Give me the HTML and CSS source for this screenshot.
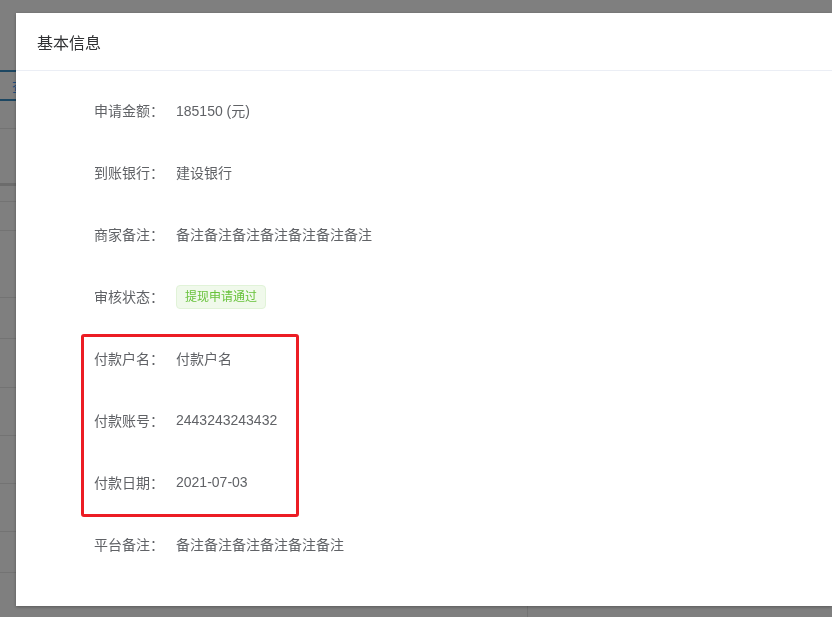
FILE: index.html
```html
<!DOCTYPE html>
<html lang="zh-CN">
<head>
<meta charset="utf-8">
<title>基本信息</title>
<link rel="stylesheet" href="styles.css">
</head>
<body>
<div class="page">
  <div class="topbar"></div>
  <div class="tabs"><span class="tab-text">查</span></div>
  <div class="trow h27"></div>
  <div class="trow h54 nob"></div>
  <div class="band"></div>
  <div class="trow h16"></div>
  <div class="trow h28"></div>
  <div class="trow h66"></div>
  <div class="trow h40"></div>
  <div class="trow h48"></div>
  <div class="trow h47"></div>
  <div class="trow h47"></div>
  <div class="trow h47"></div>
  <div class="trow h40"></div>
  <div class="trow bottom"><div class="cell-left"></div><div class="cell-right"></div></div>
</div>

<div class="overlay"></div>

<div class="dialog">
  <div class="dialog-header">
    <span class="dialog-title">基本信息</span>
  </div>
  <div class="dialog-body">
    <div class="row"><span class="label">申请金额：</span><span class="value">185150 (元)</span></div>
    <div class="row"><span class="label">到账银行：</span><span class="value">建设银行</span></div>
    <div class="row"><span class="label">商家备注：</span><span class="value">备注备注备注备注备注备注备注</span></div>
    <div class="row"><span class="label">审核状态：</span><span class="tag">提现申请通过</span></div>
    <div class="group">
      <div class="row"><span class="label">付款户名：</span><span class="value">付款户名</span></div>
      <div class="row"><span class="label">付款账号：</span><span class="value">2443243243432</span></div>
      <div class="row"><span class="label">付款日期：</span><span class="value">2021-07-03</span></div>
    </div>
    <div class="row"><span class="label">平台备注：</span><span class="value">备注备注备注备注备注备注</span></div>
  </div>
</div>
</body>
</html>
```

FILE: styles.css
```css
html, body {
  margin: 0;
  padding: 0;
  width: 832px;
  height: 617px;
  overflow: hidden;
  font-family: "Liberation Sans", "Noto Sans CJK SC", sans-serif;
}

.page {
  background: #ffffff;
  height: 617px;
}

.topbar {
  height: 70px;
  border-bottom: 2px solid #3a8ec4;
}

.tabs {
  height: 27px;
  border-bottom: 2px solid #3a8ec4;
  display: flex;
  align-items: center;
  font-size: 14px;
  color: #409eff;
}

.tab-text {
  margin-left: 12px;
}

.trow {
  border-bottom: 1px solid #e6e6e6;
}

.trow.nob {
  border-bottom: none;
}

.band {
  height: 3px;
  background: #d8d8d8;
}

.h16 { height: 15px; }
.h27 { height: 27px; }
.h28 { height: 28px; }
.h40 { height: 40px; }
.h47 { height: 47px; }
.h48 { height: 48px; }
.h54 { height: 54px; }
.h66 { height: 66px; }

.trow.bottom {
  height: 60px;
  display: flex;
  border-bottom: none;
}

.cell-left {
  width: 527px;
  border-right: 1px solid #e6e6e6;
}

.overlay {
  position: fixed;
  inset: 0;
  background: rgba(0, 0, 0, 0.5);
}

.dialog {
  position: absolute;
  top: 13px;
  left: 16px;
  right: 0;
  height: 593px;
  background: #ffffff;
  box-shadow: 0 1px 3px rgba(0, 0, 0, 0.3);
}

.dialog-header {
  height: 58px;
  border-bottom: 1px solid #ebeef5;
  display: flex;
  align-items: center;
  padding-left: 21px;
  box-sizing: border-box;
}

.dialog-title {
  font-size: 16px;
  color: #303133;
}

.dialog-body {
  padding: 8px 0 0 78px;
}

.row {
  height: 62px;
  display: flex;
  align-items: center;
  font-size: 14px;
  color: #606266;
}

.label {
  width: 82px;
  flex: none;
}

.value {
  color: #606266;
}

.tag {
  height: 24px;
  line-height: 22px;
  box-sizing: border-box;
  padding: 0 8px;
  margin-top: 2px;
  font-size: 12px;
  color: #67c23a;
  background: #f0f9eb;
  border: 1px solid #e1f3d8;
  border-radius: 4px;
}

.group {
  position: relative;
}

.group::after {
  content: "";
  position: absolute;
  left: -13px;
  top: 7px;
  width: 218px;
  height: 183px;
  box-sizing: border-box;
  border: 3px solid #ec1c24;
  border-radius: 3px;
}
```
